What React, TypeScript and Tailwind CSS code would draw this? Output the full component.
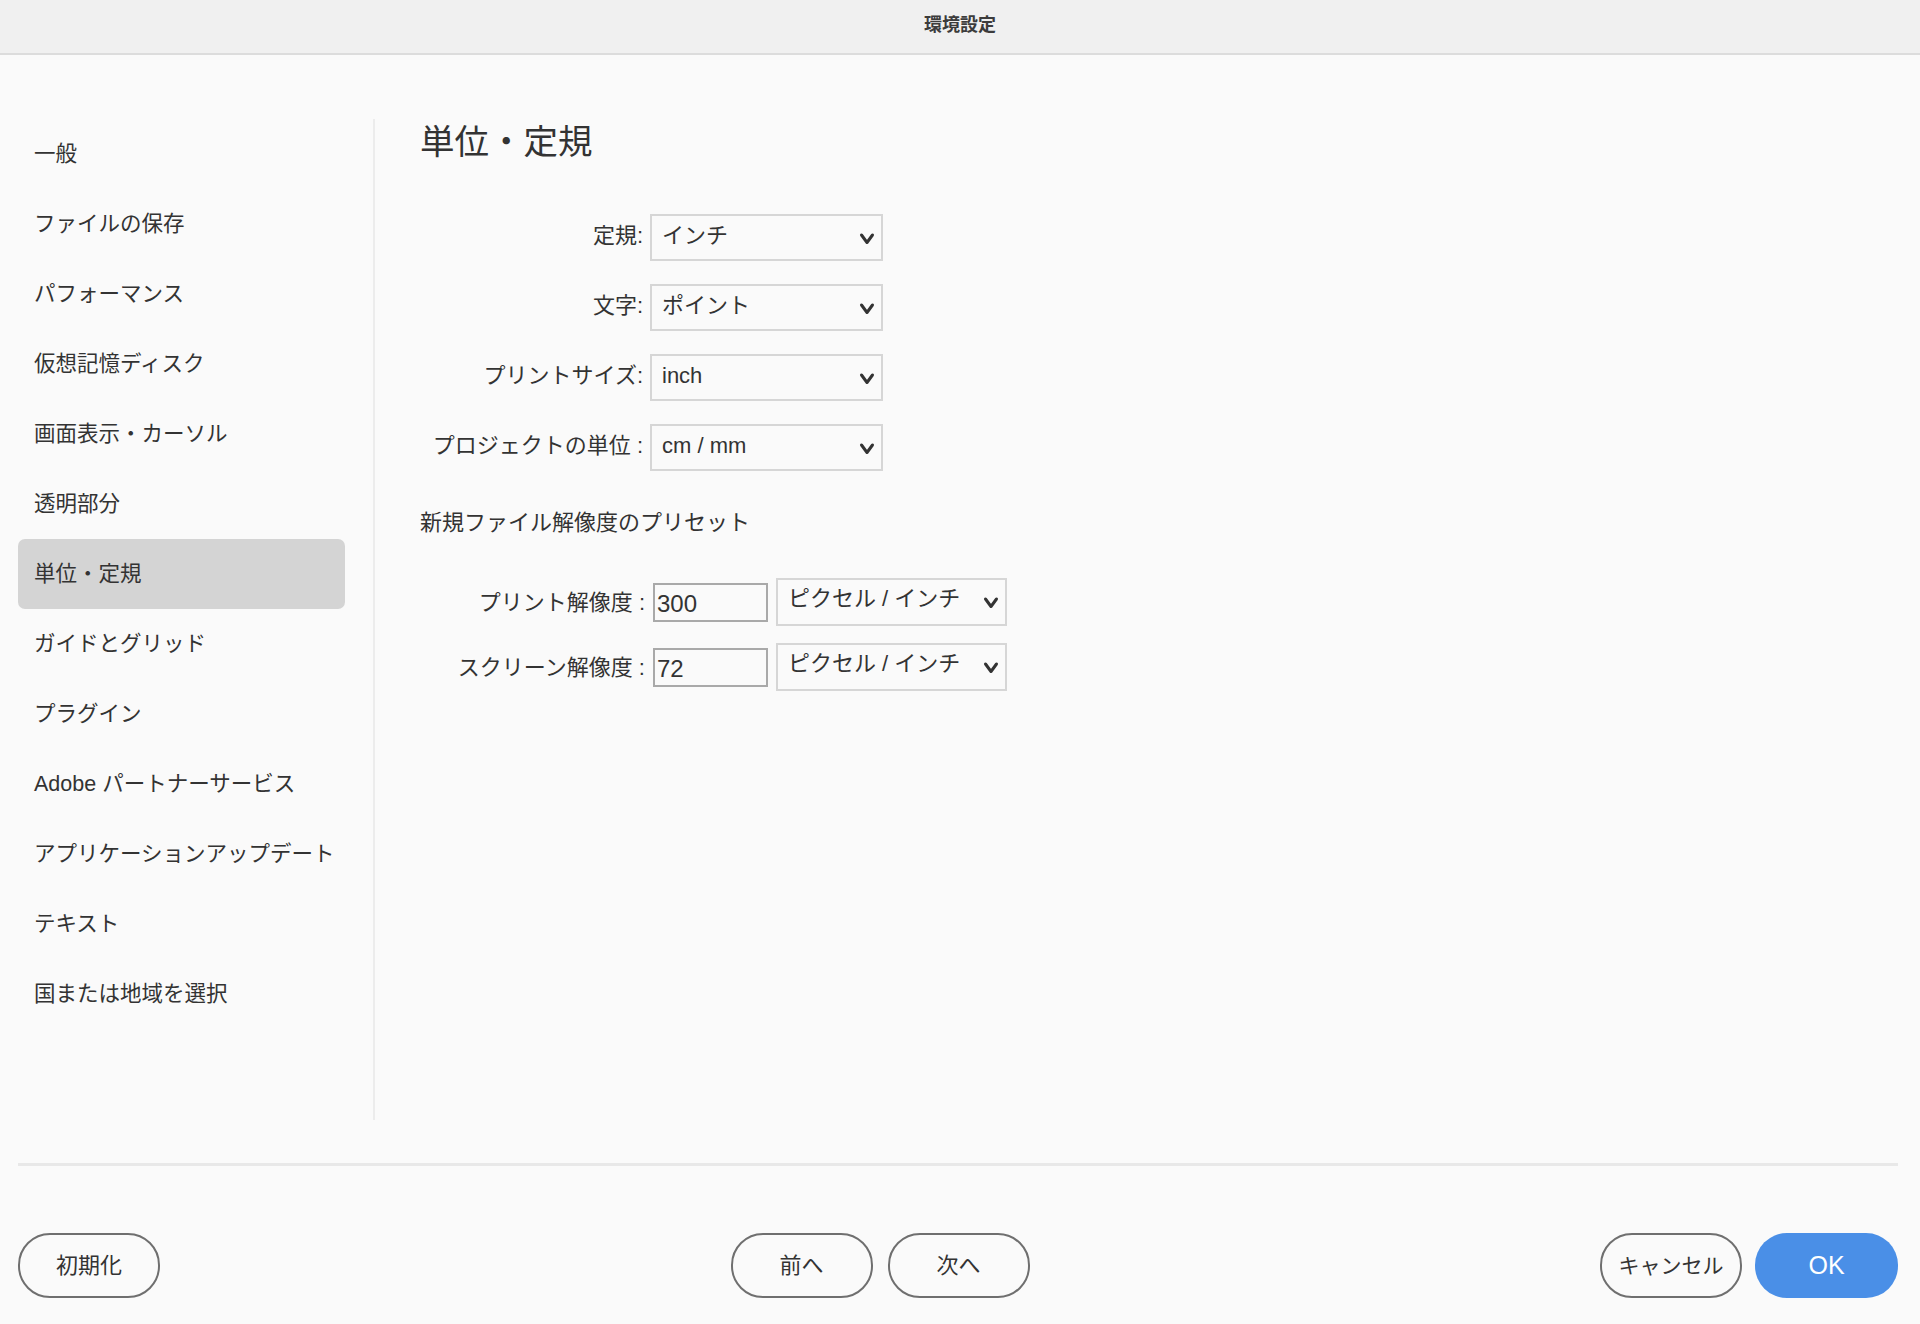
import React from "react";

const items = [
  "一般",
  "ファイルの保存",
  "パフォーマンス",
  "仮想記憶ディスク",
  "画面表示・カーソル",
  "透明部分",
  "単位・定規",
  "ガイドとグリッド",
  "プラグイン",
  "Adobe パートナーサービス",
  "アプリケーションアップデート",
  "テキスト",
  "国または地域を選択",
];

function Chevron() {
  return (
    <svg width="16" height="13" viewBox="0 0 16 13" className="shrink-0">
      <polyline points="2.5,3 8,10.5 13.5,3" fill="none" stroke="#333" strokeWidth="3" strokeLinecap="round" strokeLinejoin="round" />
    </svg>
  );
}

function Select({ value, wide }: { value: string; wide?: boolean }) {
  return (
    <div
      className={
        wide
          ? "w-[231px] h-[48px] border-2 border-[#d6d6d6] bg-[#fafafa] flex items-center justify-between pl-[10px] pr-[6px] pb-[6px]"
          : "w-[233px] h-[47px] border-2 border-[#d6d6d6] bg-[#fafafa] flex items-center justify-between pl-[10px] pr-[6px] pb-[4px]"
      }
    >
      <span className="text-[22px] text-[#333] leading-none">{value}</span>
      <span className="pt-[6px]">
        <Chevron />
      </span>
    </div>
  );
}

function Input({ value }: { value: string }) {
  return (
    <div className="w-[115px] h-[39px] border-2 border-[#a9a9a9] bg-[#fafafa] flex items-center pl-[2px] pt-[3px]">
      <span className="text-[24px] text-[#333] leading-none">{value}</span>
    </div>
  );
}

function Btn({ label, primary, big }: { label: string; primary?: boolean; big?: boolean }) {
  return (
    <div
      className={
        primary
          ? "w-[143px] h-[65px] rounded-[32px] bg-[#4a8fe7] flex items-center justify-center text-white text-[25px]"
          : "w-[142px] h-[65px] rounded-[32px] border-2 border-[#6f6f6f] bg-[#fafafa] flex items-center justify-center text-[#333] " +
            (big ? "text-[21px]" : "text-[22px]")
      }
    >
      {label}
    </div>
  );
}

export default function App() {
  return (
    <div className="w-[1920px] h-[1324px] bg-[#fafafa] flex flex-col font-['Liberation_Sans','Noto_Sans_CJK_JP',sans-serif] text-[#333]">
      <header className="h-[55px] shrink-0 bg-[#f0f0f0] border-b-2 border-[#dcdcdc] flex items-center justify-center">
        <span className="text-[18px] font-bold text-[#3c3c3c] pb-[3px]">環境設定</span>
      </header>

      <div className="flex h-[1001px] mt-[64px] shrink-0">
        <nav className="w-[355px] pl-[18px] pr-[10px] shrink-0">
          <div className="w-[327px] flex flex-col">
            {items.map((it) => (
              <div
                key={it}
                className={
                  it === "単位・定規"
                    ? "h-[70px] flex items-center pl-[16px] text-[21.5px] rounded-[7px] bg-[#d4d4d4] whitespace-nowrap"
                    : "h-[70px] flex items-center pl-[16px] text-[21.5px] whitespace-nowrap"
                }
              >
                {it}
              </div>
            ))}
          </div>
        </nav>
        <div className="w-[2px] bg-[#ececec] ml-[18px] shrink-0" />

        <main className="pl-[45px] flex flex-col">
          <h1 className="h-[46px] leading-[46px] text-[34.5px] font-normal">単位・定規</h1>

          <div className="mt-[49px] grid grid-cols-[223px_233px] gap-x-[7px] gap-y-[23px] items-center">
            <div className="text-right text-[22px] whitespace-nowrap pb-[4px]">定規:</div>
            <Select value="インチ" />
            <div className="text-right text-[22px] whitespace-nowrap pb-[4px]">文字:</div>
            <Select value="ポイント" />
            <div className="text-right text-[22px] whitespace-nowrap pb-[4px]">プリントサイズ:</div>
            <Select value="inch" />
            <div className="text-right text-[22px] whitespace-nowrap pb-[4px]">プロジェクトの単位 :</div>
            <Select value="cm / mm" />
          </div>

          <div className="mt-[37px] h-[30px] leading-[30px] text-[22px]">新規ファイル解像度のプリセット</div>

          <div className="mt-[40px] grid grid-cols-[225px_115px_231px] gap-x-[8px] gap-y-[17px] items-center">
            <div className="text-right text-[22px] whitespace-nowrap">プリント解像度 :</div>
            <Input value="300" />
            <Select value="ピクセル / インチ" wide />
            <div className="text-right text-[22px] whitespace-nowrap">スクリーン解像度 :</div>
            <Input value="72" />
            <Select value="ピクセル / インチ" wide />
          </div>
        </main>
      </div>

      <div className="mt-[43px] ml-[18px] mr-[22px] h-[3px] bg-[#e8e8e8] shrink-0" />

      <footer className="mt-[67px] pl-[18px] pr-[22px] flex justify-between items-center">
        <Btn label="初期化" />
        <div className="flex gap-[15px]">
          <Btn label="前へ" />
          <Btn label="次へ" />
        </div>
        <div className="flex gap-[13px]">
          <Btn label="キャンセル" big />
          <Btn label="OK" primary />
        </div>
      </footer>
    </div>
  );
}
